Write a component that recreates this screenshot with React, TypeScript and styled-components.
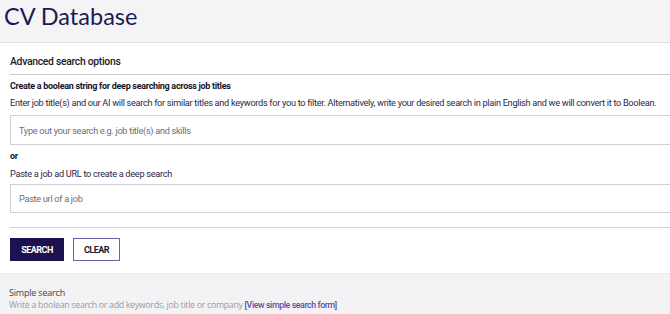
import React from "react";
import styled, { createGlobalStyle } from "styled-components";

const Global = createGlobalStyle`
  html, body { margin: 0; padding: 0; background: #fff; overflow: hidden; }
  body { font-family: Roboto, "Liberation Sans", sans-serif; }
`;

const Page = styled.div`
  width: 670px;
  height: 314px;
  overflow: hidden;
  display: flex;
  flex-direction: column;
`;

const Header = styled.header`
  height: 42px;
  background: #f4f4f6;
  border-bottom: 1px solid #dedee2;
  padding-left: 4px;
  display: flex;
  align-items: center;
  box-sizing: content-box;
`;

const Title = styled.h1`
  margin: -11px 0 0 0;
  font-family: Lato, "Open Sans", sans-serif;
  font-weight: 400;
  font-size: 23.5px;
  line-height: 24px;
  color: #1d1a52;
`;

const Main = styled.main`
  padding: 0 0 0 10px;
  width: 720px;
  box-sizing: border-box;
  display: flex;
  flex-direction: column;
`;

const SectionTitle = styled.div`
  height: 32px;
  padding-top: 5px;
  display: flex;
  align-items: center;
  font-size: 10.4px;
  font-weight: 500;
  color: #1a1a2a;
  border-bottom: 1px solid #c9c9cf;
  box-sizing: border-box;
  letter-spacing: -0.3px;
`;

const Label = styled.div<{ $h: number; $mb?: number; $bold?: boolean }>`
  height: ${(p) => p.$h}px;
  margin-bottom: ${(p) => p.$mb ?? 0}px;
  display: flex;
  align-items: center;
  font-size: ${(p) => (p.$bold ? 9 : 9.2)}px;
  font-weight: ${(p) => (p.$bold ? 700 : 400)};
  color: ${(p) => (p.$bold ? "#15152a" : "#2a2a4a")};
  letter-spacing: -0.3px;
  white-space: nowrap;
`;

const Input = styled.input<{ $h: number }>`
  height: ${(p) => p.$h}px;
  box-sizing: border-box;
  width: 100%;
  border: 1px solid #cfcfd4;
  border-radius: 0;
  padding: 0 0 0 8px;
  font-family: Roboto, "Liberation Sans", sans-serif;
  font-size: 9.2px;
  letter-spacing: -0.3px;
  color: #333;
  outline: none;
  &::placeholder { color: #6e6e76; }
`;

const Divider = styled.div`
  margin-top: 14px;
  border-top: 1px solid #cfcfd4;
`;

const Buttons = styled.div`
  display: flex;
  gap: 9px;
  margin-top: 10px;
  height: 23px;
`;

const Button = styled.button<{ $primary?: boolean }>`
  height: 23px;
  box-sizing: border-box;
  padding: 0;
  width: ${(p) => (p.$primary ? 54 : 47)}px;
  border: 1px solid ${(p) => (p.$primary ? "#1b124f" : "#6a65a0")};
  background: ${(p) => (p.$primary ? "#1b124f" : "#fff")};
  color: ${(p) => (p.$primary ? "#fff" : "#1a1a2a")};
  font-family: Roboto, "Liberation Sans", sans-serif;
  font-weight: 700;
  font-size: 9px;
  letter-spacing: -0.5px;
  cursor: pointer;
`;

const Footer = styled.footer`
  margin-top: 12px;
  flex: 1;
  background: #f3f3f5;
  border-top: 1px solid #ececef;
  padding: 12px 0 0 9px;
  font-family: "Open Sans", "Noto Sans", sans-serif;
`;

const FooterTitle = styled.div`
  font-size: 9px;
  line-height: 13px;
  color: #444;
  letter-spacing: -0.2px;
`;

const FooterText = styled.div`
  font-size: 8.8px;
  line-height: 13px;
  color: #9a9aa2;
  letter-spacing: -0.3px;
`;

const Link = styled.a`
  font-family: Roboto, "Liberation Sans", sans-serif;
  color: #5650a8;
  font-weight: 500;
  letter-spacing: -0.4px;
  text-decoration: none;
`;

export default function App() {
  return (
    <Page>
      <Global />
      <Header>
        <Title>CV Database</Title>
      </Header>
      <Main>
        <SectionTitle>Advanced search options</SectionTitle>
        <Label $h={22} $bold>
          Create a boolean string for deep searching across job titles
        </Label>
        <Label $h={10} $mb={8}>
          Enter job title(s) and our AI will search for similar titles and keywords for you to filter. Alternatively, write your desired search in plain English and we will convert it to Boolean.
        </Label>
        <Input $h={30} placeholder="Type out your search e.g. job title(s) and skills" />
        <Label $h={22} $bold>or</Label>
        <Label $h={12} $mb={5}>Paste a job ad URL to create a deep search</Label>
        <Input $h={29} placeholder="Paste url of a job" />
        <Divider />
        <Buttons>
          <Button $primary>SEARCH</Button>
          <Button>CLEAR</Button>
        </Buttons>
      </Main>
      <Footer>
        <FooterTitle>Simple search</FooterTitle>
        <FooterText>
          Write a boolean search or add keywords, job title or company{" "}
          <Link href="#">[View simple search form]</Link>
        </FooterText>
      </Footer>
    </Page>
  );
}
